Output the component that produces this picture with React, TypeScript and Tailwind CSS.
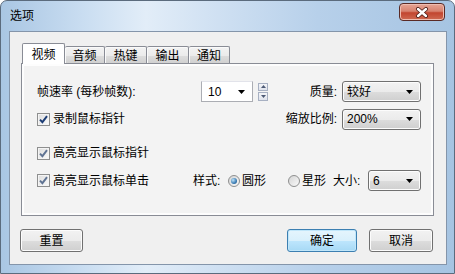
import type { ReactNode } from 'react';

const FONT = "font-['Liberation_Sans','Noto_Sans_CJK_SC',sans-serif]";

function Arrow() {
  return (
    <svg width="7" height="4" viewBox="0 0 7 4" className="shrink-0">
      <polygon points="0,0 7,0 3.5,4" fill="#000" />
    </svg>
  );
}

/* drop-down list (non editable), win7 style */
function DropList({ value, width }: { value: string; width: string }) {
  return (
    <div
      className={`${width} h-[21px] rounded-[3px] border border-[#707070] bg-[linear-gradient(to_bottom,#f2f2f2_0%,#ebebeb_50%,#dddddd_51%,#cfcfcf_100%)] shadow-[inset_0_0_0_1px_#fcfcfc] flex items-center pl-[4px] pr-[7px] justify-between`}
    >
      <span className="text-[12px] leading-none text-black">{value}</span>
      <Arrow />
    </div>
  );
}

function Check({ dim }: { dim?: boolean }) {
  return (
    <div className="w-[13px] h-[13px] border border-[#8e8f8f] bg-[linear-gradient(135deg,#dcdcdc,#fbfbfb)] shadow-[inset_0_0_0_1px_#f4f4f4] flex items-center justify-center shrink-0">
      <svg width="9" height="9" viewBox="0 0 9 9">
        <path
          d="M1 4.6 L3.4 7.2 L8 1.2"
          fill="none"
          stroke={dim ? '#5f7393' : '#1b3c74'}
          strokeWidth="1.9"
        />
      </svg>
    </div>
  );
}

function Radio({ on }: { on?: boolean }) {
  return (
    <div className="w-[12px] h-[12px] rounded-full border border-[#8e8f8f] bg-[linear-gradient(135deg,#d4d4d4,#fafafa)] flex items-center justify-center shrink-0">
      {on && (
        <div className="w-[6px] h-[6px] rounded-full bg-[radial-gradient(circle_at_35%_35%,#bfe3f8,#3b7cb4_60%,#1c4f7c)]" />
      )}
    </div>
  );
}

function Button({ children, width, primary }: { children: ReactNode; width: string; primary?: boolean }) {
  return (
    <div
      className={`${width} h-[23px] rounded-[3px] border flex items-center justify-center text-[12px] leading-none text-black ${
        primary
          ? 'border-[#3c7fb1] bg-[linear-gradient(to_bottom,#e5f5fd_0%,#d9f0fc_50%,#bee6fd_51%,#a7d9f5_100%)] shadow-[inset_0_0_0_1px_#c0e6fa]'
          : 'border-[#707070] bg-[linear-gradient(to_bottom,#f2f2f2_0%,#ebebeb_50%,#dddddd_51%,#cfcfcf_100%)] shadow-[inset_0_0_0_1px_#fcfcfc]'
      }`}
    >
      {children}
    </div>
  );
}

const tabs = [
  { label: '视频', w: 'w-[43px]' },
  { label: '音频', w: 'w-[40px]' },
  { label: '热键', w: 'w-[42px]' },
  { label: '输出', w: 'w-[42px]' },
  { label: '通知', w: 'w-[41px]' },
];

export default function App() {
  return (
    <div className={`w-[455px] h-[274px] bg-white overflow-hidden ${FONT}`}>
      {/* Aero window frame */}
      <div className="w-full h-full rounded-t-[7px] border border-[#5b6b7d] bg-[linear-gradient(to_right,#a9c6e3_0%,#c9ddf1_18%,#e2edf8_32%,#cfe0f2_48%,#b7d0ea_70%,#a6c4e2_100%)] flex flex-col">
        {/* Title bar */}
        <div className="h-[30px] flex items-start justify-between pl-[9px] pr-[9px]">
          <span className="pt-[9px] text-[12px] leading-none text-black">选项</span>
          <div className="mt-[2px] w-[46px] h-[18px] rounded-[4px] border border-[#5a2a25] bg-[linear-gradient(to_bottom,#e6a595_0%,#d7826f_45%,#c2452f_55%,#cf6a52_100%)] shadow-[inset_0_0_0_1px_#eebcb0] flex items-center justify-center">
            <svg width="14" height="11" viewBox="0 0 14 11">
              <path d="M3 2 L11 9 M11 2 L3 9" stroke="#4a1a14" strokeWidth="4" strokeLinecap="round" />
              <path d="M3 2 L11 9 M11 2 L3 9" stroke="#fff" strokeWidth="2.4" strokeLinecap="round" />
            </svg>
          </div>
        </div>

        {/* Client area */}
        <div className="ml-[8px] mr-[7px] h-[234px] border border-[#8495aa] bg-[#f0f0f0] flex flex-col pl-[11px] pr-[12px] pt-[11px]">
          {/* Tabs */}
          <div className="h-[21px] flex items-end pl-[1px]">
            {tabs.map((t, i) =>
              i === 0 ? (
                <div
                  key={t.label}
                  className={`${t.w} h-[21px] relative z-10 rounded-t-[2px] border border-b-0 border-[#898c95] bg-white flex items-start justify-center pt-[5px] text-[12px] leading-none text-black`}
                >
                  {t.label}
                </div>
              ) : (
                <div
                  key={t.label}
                  className={`${t.w} h-[18px] rounded-t-[2px] border border-b-0 border-l-0 border-[#898c95] bg-[linear-gradient(to_bottom,#f3f3f3_0%,#ebebeb_50%,#dddddd_51%,#cfcfcf_100%)] shadow-[inset_1px_1px_0_#fafafa] flex items-start justify-center pt-[3px] text-[12px] leading-none text-black`}
                >
                  {t.label}
                </div>
              ),
            )}
          </div>

          {/* Tab page */}
          <div className="-mt-[1px] h-[153px] border border-[#898c95] bg-[#f3f3f3] shadow-[inset_0_0_0_2px_#fdfdfd] flex flex-col pl-[15px] pr-[12px] pt-[17px] text-[12px] leading-none text-black">
            {/* Row 1 */}
            <div className="h-[21px] flex items-center justify-between">
              <div className="flex items-center">
                <span className="w-[164px]">帧速率 (每秒帧数):</span>
                <div className="w-[52px] h-[21px] border border-[#abadb3] border-t-[#e2e3ea] bg-white flex items-center justify-between pl-[6px] pr-[7px]">
                  <span>10</span>
                  <Arrow />
                </div>
                <div className="ml-[5px] w-[10px] h-[18px] flex flex-col gap-[1px]">
                  <div className="h-[8.5px] border border-[#a7b0c2] bg-[linear-gradient(to_bottom,#f4f5f8,#dfe3ec)] flex items-center justify-center">
                    <svg width="5" height="3" viewBox="0 0 5 3">
                      <polygon points="0,3 5,3 2.5,0" fill="#4d5a75" />
                    </svg>
                  </div>
                  <div className="h-[8.5px] border border-[#a7b0c2] bg-[linear-gradient(to_bottom,#f4f5f8,#dfe3ec)] flex items-center justify-center">
                    <svg width="5" height="3" viewBox="0 0 5 3">
                      <polygon points="0,0 5,0 2.5,3" fill="#4d5a75" />
                    </svg>
                  </div>
                </div>
              </div>
              <div className="flex items-center">
                <span>质量:</span>
                <div className="ml-[5px]">
                  <DropList value="较好" width="w-[79px]" />
                </div>
              </div>
            </div>

            {/* Row 2 */}
            <div className="mt-[7px] h-[20px] flex items-center justify-between">
              <div className="flex items-center gap-[3px]">
                <Check />
                <span>录制鼠标指针</span>
              </div>
              <div className="flex items-center">
                <span>缩放比例:</span>
                <div className="ml-[5px]">
                  <DropList value="200%" width="w-[79px]" />
                </div>
              </div>
            </div>

            {/* Row 3 */}
            <div className="mt-[14px] h-[20px] flex items-center gap-[3px]">
              <Check dim />
              <span>高亮显示鼠标指针</span>
            </div>

            {/* Row 4 */}
            <div className="mt-[7px] h-[21px] flex items-center justify-between">
              <div className="flex items-center gap-[3px]">
                <Check dim />
                <span>高亮显示鼠标单击</span>
              </div>
              <div className="flex items-center">
                <span className="w-[35px]">样式:</span>
                <Radio on />
                <span className="ml-[2px] w-[46px]">圆形</span>
                <Radio />
                <span className="ml-[2px] w-[31px]">星形</span>
                <span className="w-[35px]">大小:</span>
                <DropList value="6" width="w-[53px]" />
              </div>
            </div>
          </div>

          {/* Buttons */}
          <div className="mt-[13px] flex items-center justify-between -ml-[1px] mr-[1px]">
            <Button width="w-[63px]">重置</Button>
            <div className="flex items-center gap-[12px]">
              <Button width="w-[70px]" primary>
                确定
              </Button>
              <Button width="w-[64px]">取消</Button>
            </div>
          </div>
        </div>
      </div>
    </div>
  );
}
